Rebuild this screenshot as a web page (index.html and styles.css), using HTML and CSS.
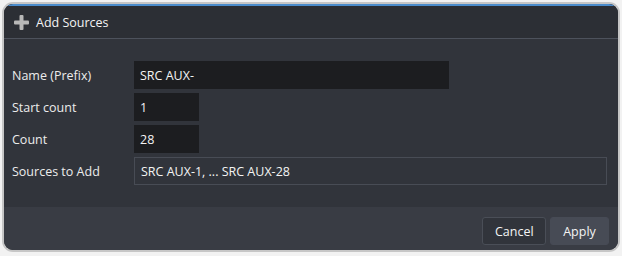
FILE: index.html
```html
<!DOCTYPE html>
<html lang="en">
<head>
  <meta charset="UTF-8">
  <title>Add Sources</title>
  <link rel="stylesheet" href="styles.css">
</head>
<body>
  <div class="dialog">
    <header class="dialog-header">
      <svg class="plus-icon" width="15" height="15" viewBox="0 0 15 15">
        <rect x="5.5" y="0" width="4" height="15" rx="1"/>
        <rect x="0" y="5.5" width="15" height="4" rx="1"/>
      </svg>
      <span>Add Sources</span>
    </header>
    <div class="dialog-body">
      <div class="row">
        <label for="name">Name (Prefix)</label>
        <input class="field wide" type="text" id="name" value="SRC AUX-">
      </div>
      <div class="row">
        <label for="start">Start count</label>
        <input class="field short" type="text" id="start" value="1">
      </div>
      <div class="row">
        <label for="count">Count</label>
        <input class="field short" type="text" id="count" value="28">
      </div>
      <div class="row">
        <label>Sources to Add</label>
        <div class="preview">SRC AUX-1, ... SRC AUX-28</div>
      </div>
    </div>
    <footer class="dialog-footer">
      <button class="btn btn-cancel">Cancel</button>
      <button class="btn btn-apply">Apply</button>
    </footer>
  </div>
</body>
</html>
```

FILE: styles.css
```css
body {
  margin: 0;
  padding: 2px;
  background-color: #f2f2f2;
  font-family: 'Open Sans', 'Noto Sans', sans-serif;
  font-size: 12.5px;
  color: #ececec;
}

.dialog {
  height: 250px;
  box-sizing: border-box;
  border: 2px solid #c6c6c6;
  border-radius: 11px;
  background-color: #31343b;
  overflow: hidden;
  display: flex;
  flex-direction: column;
}

.dialog-header {
  display: flex;
  align-items: center;
  gap: 7px;
  height: 35px;
  box-sizing: border-box;
  padding: 0 10px;
  border-top: 2px solid #4b8ccc;
  border-bottom: 1px solid #4d525c;
  background-color: #2c2f35;
  color: #f4f4f4;
}

.plus-icon {
  fill: #b8b8b8;
}

.dialog-body {
  flex: 1;
  padding: 22px 11px 22px 8px;
  display: flex;
  flex-direction: column;
  gap: 4px;
}

.row {
  display: flex;
  align-items: center;
  height: 28px;
}

.row label {
  width: 122px;
  flex: none;
}

.field {
  height: 28px;
  box-sizing: border-box;
  padding: 0 6px;
  border: none;
  background-color: #1c1d20;
  color: #f4f4f4;
  font-family: inherit;
  font-size: 12.5px;
  outline: none;
}

.field.wide {
  width: 315px;
}

.field.short {
  width: 65px;
}

.preview {
  flex: 1;
  height: 28px;
  box-sizing: border-box;
  padding: 0 6px;
  border: 1px solid #484c55;
  display: flex;
  align-items: center;
  color: #f4f4f4;
}

.dialog-footer {
  height: 43px;
  box-sizing: border-box;
  padding: 10px 9px 5px;
  background-color: #393c44;
  display: flex;
  justify-content: flex-end;
  align-items: flex-start;
  gap: 4px;
}

.btn {
  height: 28px;
  padding: 0 12px;
  border-radius: 3px;
  font-family: inherit;
  font-size: 12.5px;
  color: #f4f4f4;
  cursor: pointer;
}

.btn-cancel {
  width: 64px;
  background-color: #31343b;
  border: 1px solid #4a4e57;
}

.btn-apply {
  width: 59px;
  background-color: #474b55;
  border: 1px solid #474b55;
}
```
